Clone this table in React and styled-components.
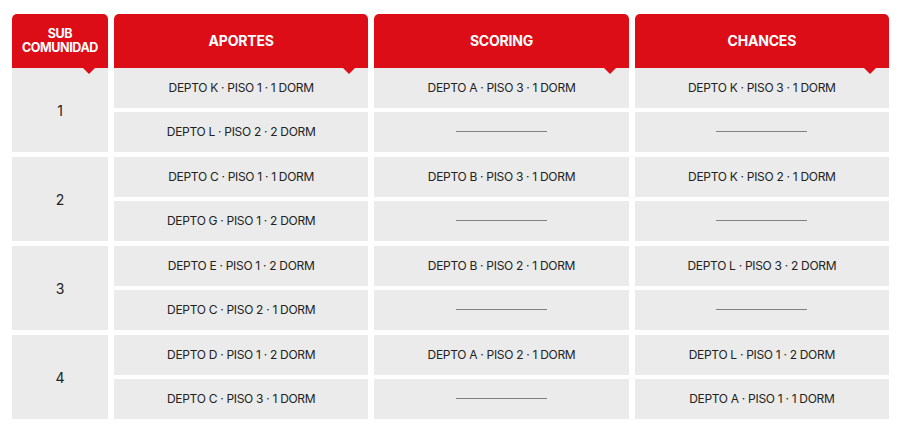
import React from "react";
import styled, { createGlobalStyle } from "styled-components";

const GlobalStyle = createGlobalStyle`
  body {
    margin: 0;
    background: #ffffff;
    font-family: Inter, "Liberation Sans", sans-serif;
  }
`;

const Page = styled.div`
  padding: 14px 12px 13px;
`;

const Grid = styled.div`
  display: grid;
  grid-template-columns: 96px 1fr 1fr 1fr;
  column-gap: 6px;
`;

const HeadCell = styled.div`
  position: relative;
  height: 54px;
  background: #dd0d17;
  border-radius: 5px 5px 0 0;
  color: #ffffff;
  font-weight: 700;
  font-size: ${(p) => (p.small ? "12.5px" : "14px")};
  line-height: ${(p) => (p.small ? "14px" : "16px")};
  letter-spacing: ${(p) => (p.small ? "-0.4px" : "-0.2px")};
  display: flex;
  align-items: center;
  justify-content: center;
  text-align: center;
  &::after {
    content: "";
    position: absolute;
    right: 12px;
    bottom: -6px;
    width: 0;
    height: 0;
    border-left: 7px solid transparent;
    border-right: 7px solid transparent;
    border-top: 7px solid #dd0d17;
    z-index: 1;
  }
`;

const Group = styled.div`
  grid-column: 1 / -1;
  display: grid;
  grid-template-columns: 96px 1fr 1fr 1fr;
  grid-template-rows: 40px 40px;
  column-gap: 6px;
  row-gap: 4px;
  margin-top: ${(p) => (p.first ? "0" : "5px")};
`;

const SubCell = styled.div`
  grid-row: 1 / 3;
  background: #ebebeb;
  display: flex;
  align-items: center;
  justify-content: center;
  font-size: 14px;
  color: #222222;
`;

const Cell = styled.div`
  background: #ebebeb;
  display: flex;
  align-items: center;
  justify-content: center;
  padding-bottom: 1px;
  font-size: 12px;
  letter-spacing: -0.3px;
  color: #222222;
`;

const Dash = styled.span`
  display: block;
  width: 91px;
  height: 1px;
  background: #808080;
`;

const data = [
  {
    n: 1,
    rows: [
      ["DEPTO K · PISO 1 · 1 DORM", "DEPTO A · PISO 3 · 1 DORM", "DEPTO K · PISO 3 · 1 DORM"],
      ["DEPTO L · PISO 2 · 2 DORM", null, null],
    ],
  },
  {
    n: 2,
    rows: [
      ["DEPTO C · PISO 1 · 1 DORM", "DEPTO B · PISO 3 · 1 DORM", "DEPTO K · PISO 2 · 1 DORM"],
      ["DEPTO G · PISO 1 · 2 DORM", null, null],
    ],
  },
  {
    n: 3,
    rows: [
      ["DEPTO E · PISO 1 · 2 DORM", "DEPTO B · PISO 2 · 1 DORM", "DEPTO L · PISO 3 · 2 DORM"],
      ["DEPTO C · PISO 2 · 1 DORM", null, null],
    ],
  },
  {
    n: 4,
    rows: [
      ["DEPTO D · PISO 1 · 2 DORM", "DEPTO A · PISO 2 · 1 DORM", "DEPTO L · PISO 1 · 2 DORM"],
      ["DEPTO C · PISO 3 · 1 DORM", null, "DEPTO A · PISO 1 · 1 DORM"],
    ],
  },
];

const App = () => {
  return (
    <Page>
      <GlobalStyle />
      <Grid>
        <HeadCell small>
          SUB
          <br />
          COMUNIDAD
        </HeadCell>
        <HeadCell>APORTES</HeadCell>
        <HeadCell>SCORING</HeadCell>
        <HeadCell>CHANCES</HeadCell>
        {data.map((g, i) => (
          <Group key={g.n} first={i === 0}>
            <SubCell>{g.n}</SubCell>
            {g.rows.flat().map((v, j) => (
              <Cell key={j}>{v ? v : <Dash />}</Cell>
            ))}
          </Group>
        ))}
      </Grid>
    </Page>
  );
};

export default App;
